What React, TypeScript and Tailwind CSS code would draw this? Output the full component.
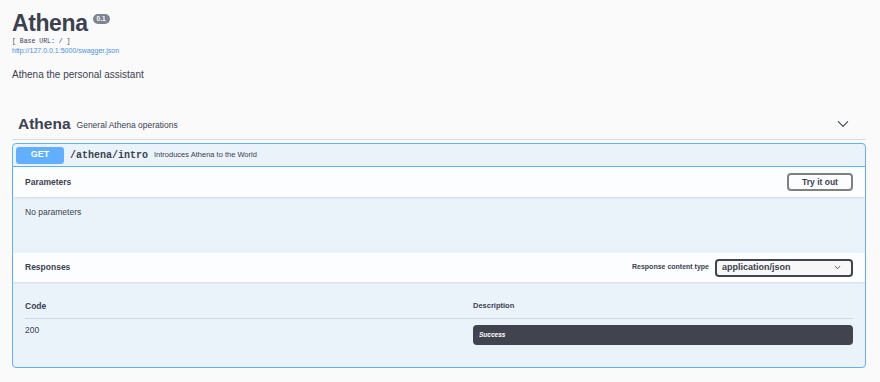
const ChevronDown = ({ size = 12, className = '', strokeWidth = 2 }) => (
  <svg width={size} height={size} viewBox="0 0 24 24" fill="none" stroke="currentColor" strokeWidth={strokeWidth} strokeLinecap="round" strokeLinejoin="round" className={className}>
    <polyline points="4 8 12 16 20 8" />
  </svg>
);

export default function App() {
  return (
    <div className="min-h-screen bg-[#fafafa] pl-3 pr-[14px] pt-[10px] font-['Liberation_Sans',Arial,sans-serif] text-[#3b4151]">
      {/* Info */}
      <div>
        <div className="flex items-start">
          <h1 className="text-[23px] leading-[26px] font-bold tracking-[-0.4px] text-[#3b4151]">Athena</h1>
          <span className="ml-[5px] mt-[4px] rounded-full bg-[#7d8492] px-[4px] text-[6.5px] leading-[10px] font-bold text-white">
            0.1
          </span>
        </div>
        <div className="mt-[1px] font-['Liberation_Mono',monospace] text-[6.5px] leading-[9px] text-[#3b4151]">
          [ Base URL: / ]
        </div>
        <a className="block text-[7px] leading-[9px] text-[#4990e2]">http://127.0.0.1:5000/swagger.json</a>
        <p className="mt-[13px] text-[10px] leading-[13px]">Athena the personal assistant</p>
      </div>

      {/* Tag header */}
      <div className="mt-[28px] flex h-[31px] items-center border-b border-[#d8dbe0] pl-[6px] pr-[16px]">
        <h3 className="text-[15.5px] font-bold leading-none">Athena</h3>
        <span className="ml-[6px] mt-[2px] text-[8.5px] leading-none">General Athena operations</span>
        <ChevronDown size={14} strokeWidth={1.8} className="ml-auto text-[#3b4151]" />
      </div>

      {/* Operation */}
      <div className="mt-[3px] rounded-[4px] border border-[#61affe] bg-[#ebf3fa]">
        <div className="flex h-[23px] items-center border-b border-[#61affe] pl-[3px]">
          <span className="flex h-[17px] w-[48px] items-center justify-center rounded-[3px] bg-[#61affe] text-[9px] font-bold text-white">
            GET
          </span>
          <span className="ml-[6px] font-['Liberation_Mono',monospace] text-[10px] font-bold">/athena/intro</span>
          <span className="ml-[6px] text-[7.5px]">Introduces Athena to the World</span>
        </div>

        {/* Parameters */}
        <div className="flex h-[30px] items-center justify-between bg-white/80 pl-[12px] pr-[12px] shadow-[0_1px_2px_rgba(0,0,0,0.1)]">
          <h4 className="text-[8.5px] font-bold">Parameters</h4>
          <button className="flex h-[18px] w-[66px] items-center justify-center rounded-[4px] border-2 border-[#808080] bg-transparent text-[8.5px] font-bold text-[#3b4151]">
            Try it out
          </button>
        </div>
        <div className="h-[56px] pl-[12px] pt-[10px] text-[8.5px] leading-[10px]">No parameters</div>

        {/* Responses */}
        <div className="flex h-[29px] items-center bg-white/80 pl-[12px] pr-[12px] shadow-[0_1px_2px_rgba(0,0,0,0.1)]">
          <h4 className="text-[8.5px] font-bold">Responses</h4>
          <span className="ml-auto mr-[6px] text-[7px] font-bold">Response content type</span>
          <div className="flex h-[18px] w-[138px] items-center justify-between rounded-[4px] border-2 border-[#41444e] bg-[#f7f7f7] pl-[5px] pr-[10px] text-[9px] font-bold">
            <span>application/json</span>
            <ChevronDown size={7} strokeWidth={3} />
          </div>
        </div>
        <div className="px-[12px] pb-[22px] pt-[19px]">
          <div className="grid grid-cols-[448px_1fr] border-b border-[#d3d6da] pb-[7px] text-[7.5px] font-bold leading-[10px]">
            <span className="text-[8.5px]">Code</span>
            <span>Description</span>
          </div>
          <div className="grid grid-cols-[448px_1fr] pt-[6px]">
            <span className="text-[8.5px] leading-[10px]">200</span>
            <div className="flex h-[20px] items-center rounded-[4px] bg-[#41444e] pl-[6px] text-[6.5px] font-bold italic text-white">
              Success
            </div>
          </div>
        </div>
      </div>
    </div>
  );
}
